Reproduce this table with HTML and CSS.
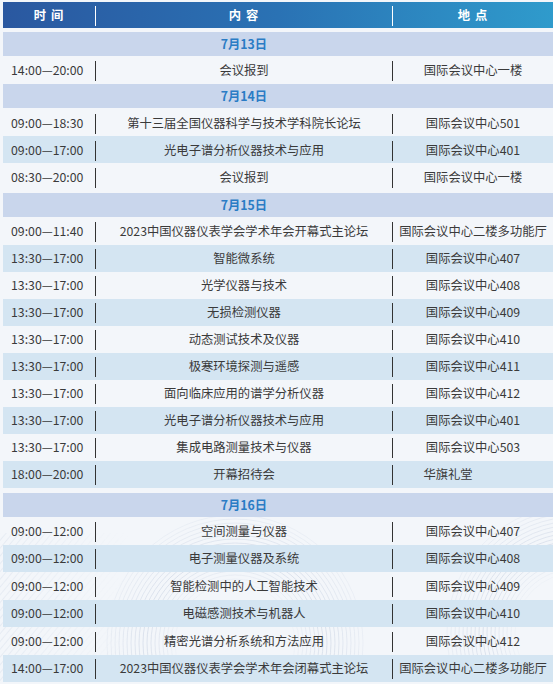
FILE: index.html
```html
<!DOCTYPE html>
<html lang="zh-CN">
<head>
<meta charset="utf-8">
<title>日程安排</title>
<link rel="stylesheet" href="styles.css">
</head>
<body>
<div class="schedule">
  <div class="row head">
    <div class="c-time">时 间</div><i class="sep"></i><div class="c-title">内 容</div><i class="sep"></i><div class="c-loc">地 点</div>
  </div>

  <div class="date d13"><div class="c-title">7月13日</div></div>
  <div class="row"><div class="c-time">14:00—20:00</div><i class="sep"></i><div class="c-title">会议报到</div><i class="sep"></i><div class="c-loc">国际会议中心一楼</div></div>

  <div class="date d14"><div class="c-title">7月14日</div></div>
  <div class="row"><div class="c-time">09:00—18:30</div><i class="sep"></i><div class="c-title">第十三届全国仪器科学与技术学科院长论坛</div><i class="sep"></i><div class="c-loc">国际会议中心501</div></div>
  <div class="row alt"><div class="c-time">09:00—17:00</div><i class="sep"></i><div class="c-title">光电子谱分析仪器技术与应用</div><i class="sep"></i><div class="c-loc">国际会议中心401</div></div>
  <div class="row"><div class="c-time">08:30—20:00</div><i class="sep"></i><div class="c-title">会议报到</div><i class="sep"></i><div class="c-loc">国际会议中心一楼</div></div>

  <div class="date d15"><div class="c-title">7月15日</div></div>
  <div class="row"><div class="c-time">09:00—11:40</div><i class="sep"></i><div class="c-title">2023中国仪器仪表学会学术年会开幕式主论坛</div><i class="sep"></i><div class="c-loc">国际会议中心二楼多功能厅</div></div>
  <div class="row alt"><div class="c-time">13:30—17:00</div><i class="sep"></i><div class="c-title">智能微系统</div><i class="sep"></i><div class="c-loc">国际会议中心407</div></div>
  <div class="row"><div class="c-time">13:30—17:00</div><i class="sep"></i><div class="c-title">光学仪器与技术</div><i class="sep"></i><div class="c-loc">国际会议中心408</div></div>
  <div class="row alt"><div class="c-time">13:30—17:00</div><i class="sep"></i><div class="c-title">无损检测仪器</div><i class="sep"></i><div class="c-loc">国际会议中心409</div></div>
  <div class="row"><div class="c-time">13:30—17:00</div><i class="sep"></i><div class="c-title">动态测试技术及仪器</div><i class="sep"></i><div class="c-loc">国际会议中心410</div></div>
  <div class="row alt"><div class="c-time">13:30—17:00</div><i class="sep"></i><div class="c-title">极寒环境探测与遥感</div><i class="sep"></i><div class="c-loc">国际会议中心411</div></div>
  <div class="row"><div class="c-time">13:30—17:00</div><i class="sep"></i><div class="c-title">面向临床应用的谱学分析仪器</div><i class="sep"></i><div class="c-loc">国际会议中心412</div></div>
  <div class="row alt"><div class="c-time">13:30—17:00</div><i class="sep"></i><div class="c-title">光电子谱分析仪器技术与应用</div><i class="sep"></i><div class="c-loc">国际会议中心401</div></div>
  <div class="row"><div class="c-time">13:30—17:00</div><i class="sep"></i><div class="c-title">集成电路测量技术与仪器</div><i class="sep"></i><div class="c-loc">国际会议中心503</div></div>
  <div class="row alt"><div class="c-time">18:00—20:00</div><i class="sep"></i><div class="c-title">开幕招待会</div><i class="sep"></i><div class="c-loc shift">华旗礼堂</div></div>

  <div class="last">
    <svg class="deco" width="553" height="200" viewBox="0 0 553 200" aria-hidden="true">
      <defs>
        <radialGradient id="fadeA" cx="235" cy="150" r="150" gradientUnits="userSpaceOnUse">
          <stop offset="0.35" stop-color="#fff" stop-opacity="0"/>
          <stop offset="0.6" stop-color="#fff" stop-opacity="1"/>
          <stop offset="1" stop-color="#fff" stop-opacity="0"/>
        </radialGradient>
        <radialGradient id="fadeB" cx="575" cy="140" r="150" gradientUnits="userSpaceOnUse">
          <stop offset="0.35" stop-color="#fff" stop-opacity="0"/>
          <stop offset="0.6" stop-color="#fff" stop-opacity="1"/>
          <stop offset="1" stop-color="#fff" stop-opacity="0"/>
        </radialGradient>
        <linearGradient id="fadeC" x1="0" y1="0" x2="1" y2="0">
          <stop offset="0" stop-color="#fff" stop-opacity="1"/>
          <stop offset="1" stop-color="#fff" stop-opacity="0"/>
        </linearGradient>
        <mask id="mA"><rect width="553" height="200" fill="url(#fadeA)"/></mask>
        <mask id="mB"><rect width="553" height="200" fill="url(#fadeB)"/></mask>
        <mask id="mC"><rect x="0" y="40" width="130" height="160" fill="url(#fadeC)"/></mask>
        <pattern id="hatch" width="5" height="5" patternUnits="userSpaceOnUse" patternTransform="rotate(40)">
          <line x1="0" y1="0" x2="0" y2="5" stroke="#c3cee0" stroke-width="0.7"/>
        </pattern>
      </defs>
      <g fill="none" stroke="#c4cfe0" stroke-width="0.7" mask="url(#mA)">
        <circle cx="235" cy="150" r="60"/><circle cx="235" cy="150" r="64"/><circle cx="235" cy="150" r="68"/>
        <circle cx="235" cy="150" r="72"/><circle cx="235" cy="150" r="76"/><circle cx="235" cy="150" r="80"/>
        <circle cx="235" cy="150" r="84"/><circle cx="235" cy="150" r="88"/><circle cx="235" cy="150" r="92"/>
        <circle cx="235" cy="150" r="96"/><circle cx="235" cy="150" r="100"/><circle cx="235" cy="150" r="104"/>
        <circle cx="235" cy="150" r="108"/><circle cx="235" cy="150" r="112"/><circle cx="235" cy="150" r="116"/>
        <circle cx="235" cy="150" r="120"/><circle cx="235" cy="150" r="124"/><circle cx="235" cy="150" r="128"/>
      </g>
      <g fill="none" stroke="#c4cfe0" stroke-width="0.7" mask="url(#mB)">
        <circle cx="575" cy="140" r="60"/><circle cx="575" cy="140" r="64"/><circle cx="575" cy="140" r="68"/>
        <circle cx="575" cy="140" r="72"/><circle cx="575" cy="140" r="76"/><circle cx="575" cy="140" r="80"/>
        <circle cx="575" cy="140" r="84"/><circle cx="575" cy="140" r="88"/><circle cx="575" cy="140" r="92"/>
        <circle cx="575" cy="140" r="96"/><circle cx="575" cy="140" r="100"/><circle cx="575" cy="140" r="104"/>
        <circle cx="575" cy="140" r="108"/><circle cx="575" cy="140" r="112"/><circle cx="575" cy="140" r="116"/>
        <circle cx="575" cy="140" r="120"/><circle cx="575" cy="140" r="124"/><circle cx="575" cy="140" r="128"/>
      </g>
      <rect x="0" y="40" width="130" height="160" fill="url(#hatch)" mask="url(#mC)"/>
    </svg>

    <div class="date d16"><div class="c-title">7月16日</div></div>
    <div class="row tall"><div class="c-time">09:00—12:00</div><i class="sep"></i><div class="c-title">空间测量与仪器</div><i class="sep"></i><div class="c-loc">国际会议中心407</div></div>
    <div class="row tall alt"><div class="c-time">09:00—12:00</div><i class="sep"></i><div class="c-title">电子测量仪器及系统</div><i class="sep"></i><div class="c-loc">国际会议中心408</div></div>
    <div class="row tall"><div class="c-time">09:00—12:00</div><i class="sep"></i><div class="c-title">智能检测中的人工智能技术</div><i class="sep"></i><div class="c-loc">国际会议中心409</div></div>
    <div class="row tall alt"><div class="c-time">09:00—12:00</div><i class="sep"></i><div class="c-title">电磁感测技术与机器人</div><i class="sep"></i><div class="c-loc">国际会议中心410</div></div>
    <div class="row tall"><div class="c-time">09:00—12:00</div><i class="sep"></i><div class="c-title">精密光谱分析系统和方法应用</div><i class="sep"></i><div class="c-loc">国际会议中心412</div></div>
    <div class="row tall alt"><div class="c-time">14:00—17:00</div><i class="sep"></i><div class="c-title">2023中国仪器仪表学会学术年会闭幕式主论坛</div><i class="sep"></i><div class="c-loc">国际会议中心二楼多功能厅</div></div>
  </div>
</div>
</body>
</html>
```
FILE: styles.css
```css
html, body {
  margin: 0;
  padding: 0;
}
body {
  background: #f3f6fa;
  font-family: "Noto Sans CJK SC", "Noto Sans", sans-serif;
  font-size: 12.3px;
  color: #3a3a3a;
  overflow: hidden;
}
.schedule {
  width: 550px;
  padding: 2px 0 0 3px;
}
.row, .date {
  display: grid;
  grid-template-columns: 92px 1px 296px 1px 1fr;
  align-items: center;
}
.row {
  height: 27px;
}
.row.tall {
  height: 27.5px;
}
.row.alt {
  background: #d4e5f2;
}
.sep {
  display: block;
  width: 1px;
  height: 20px;
  background: #333;
  margin-top: 2px;
}
.c-time {
  padding-left: 8px;
  white-space: nowrap;
}
.c-title, .c-loc {
  text-align: center;
  white-space: nowrap;
}
.c-loc.shift {
  padding-right: 50px;
}
.head {
  height: 26px;
  background: linear-gradient(90deg, #2a58a0 0%, #2a72b4 50%, #2f9bcc 100%);
  color: #fff;
  font-weight: 700;
  letter-spacing: 1px;
}
.head .c-time {
  padding-left: 0;
  text-align: center;
}
.head .sep {
  background: #fff;
  margin-top: 2px;
}
.date {
  height: 24px;
  background: #c9d6ec;
  color: #2a7cc5;
  font-weight: 700;
}
.date .c-title {
  grid-column: 3;
}
.d13 { margin-top: 4px; }
.d14 { margin-top: 1px; margin-bottom: 1px; }
.d15 { margin-top: 3px; margin-bottom: 0.5px; }
.d16 { margin-top: 5.5px; }
.last {
  position: relative;
  z-index: 0;
}
.deco {
  position: absolute;
  left: -3px;
  top: 0;
  z-index: -1;
  opacity: 0.75;
}
```
